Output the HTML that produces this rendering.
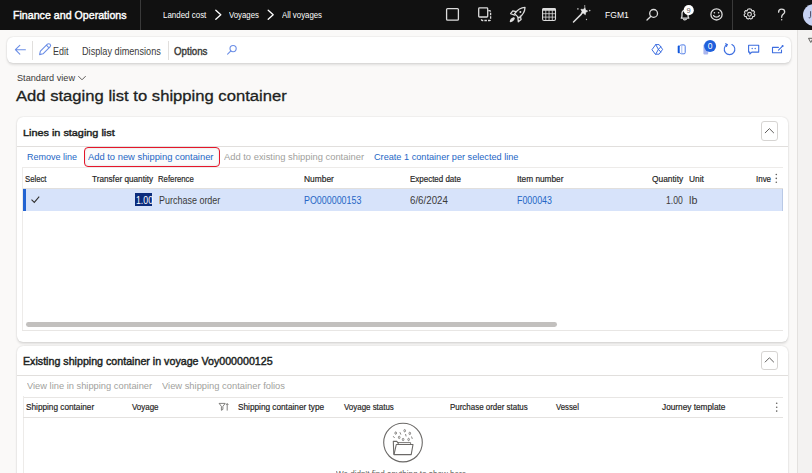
<!DOCTYPE html>
<html><head><meta charset="utf-8">
<style>
*{box-sizing:border-box;margin:0;padding:0}
html,body{width:812px;height:473px;overflow:hidden;background:#faf9f8;font-family:"Liberation Sans",sans-serif;color:#201f1e;position:relative}
.tx{position:absolute;white-space:nowrap;line-height:1.118;transform-origin:0 0}
.r{position:absolute}
svg{position:absolute;left:0;top:0;overflow:visible}
</style></head><body>
<!-- right strip -->
<div class="r" style="left:797px;top:30px;width:15px;height:443px;background:#f3f2f1;border-left:1.5px solid #e3e1df"></div>
<!-- top bar -->
<div class="r" style="left:0;top:0;width:812px;height:30px;background:#111111"></div>
<div class="r" style="left:139.5px;top:0;width:1px;height:30px;background:#3a3a3a"></div>
<div class="r" style="left:732px;top:0;width:1px;height:30px;background:#3a3a3a"></div>
<!-- avatar -->
<div class="r" style="left:803px;top:4px;width:22px;height:22px;border-radius:50%;background:#c7d3f3"></div>
<!-- action pane -->
<div class="r" style="left:7px;top:37px;width:784px;height:26px;background:#fff;border-radius:6px;box-shadow:0 0 1.5px rgba(0,0,0,.14),0 1.3px 2.6px rgba(0,0,0,.11)"></div>
<div class="r" style="left:32px;top:40.5px;width:1px;height:19px;background:#e1dfdd"></div>
<div class="r" style="left:167.5px;top:40.5px;width:1px;height:19px;background:#e1dfdd"></div>
<!-- card 1 -->
<div class="r" style="left:17px;top:117px;width:771px;height:224.5px;background:#fff;border-radius:6px;box-shadow:0 0 1.5px rgba(0,0,0,.14),0 1.3px 2.6px rgba(0,0,0,.11)"></div>
<div class="r" style="left:17px;top:146px;width:771px;height:1px;background:#e1dfdd"></div>
<div class="r" style="left:761px;top:121px;width:17px;height:20px;border:1px solid #d6d4d2;border-radius:3px"></div>
<!-- red highlight box -->
<div class="r" style="left:84.3px;top:147px;width:135.6px;height:20px;border:1.7px solid #e5162a;border-radius:4px;background:#fbfbfb;box-shadow:inset 0 0 2.5px rgba(0,0,0,.13)"></div>
<!-- grid 1 -->
<div class="r" style="left:22px;top:167px;width:760.5px;height:164px;border:1px solid #edebe9;border-right:none;border-bottom:none"></div>
<div class="r" style="left:22.5px;top:188px;width:760px;height:1px;background:#e1dfdd"></div>
<div class="r" style="left:22.5px;top:189px;width:760px;height:22px;background:#d7e3fa;border-right:1px solid #b9c9e6"></div>
<div class="r" style="left:22.5px;top:189px;width:3px;height:22px;background:#2364d2"></div>
<div class="r" style="left:135.2px;top:192.8px;width:16.9px;height:13.5px;background:#0c2c7c"></div>
<div class="r" style="left:26px;top:322.2px;width:531.4px;height:4.7px;border-radius:2.4px;background:#c2c0be"></div>
<div class="r" style="left:22px;top:329.5px;width:760.5px;height:1.3px;background:#e8e6e4"></div>
<!-- card 2 -->
<div class="r" style="left:17px;top:346px;width:771px;height:140px;background:#fff;border-radius:6px;box-shadow:0 0 1.5px rgba(0,0,0,.14),0 1.3px 2.6px rgba(0,0,0,.11)"></div>
<div class="r" style="left:17px;top:374.5px;width:771px;height:1px;background:#e1dfdd"></div>
<div class="r" style="left:761px;top:350.5px;width:17px;height:19px;border:1px solid #d6d4d2;border-radius:3px"></div>
<div class="r" style="left:22.5px;top:396.5px;width:760px;height:1.3px;background:#e8e6e4"></div>
<div class="r" style="left:22.5px;top:396px;width:1px;height:80px;background:#edebe9"></div>
<div class="r" style="left:22.5px;top:416.9px;width:760px;height:1.2px;background:#e4e2e0"></div>

<svg width="812" height="473" viewBox="0 0 812 473">
<g fill="none" stroke="#dcdcdc" stroke-width="1.3" stroke-linecap="round" stroke-linejoin="round">
  <!-- breadcrumb chevrons -->
  <path d="M215.8 10.3 L220.8 14.8 L215.8 19.3" stroke="#fff"/>
  <path d="M268.2 10.3 L273.2 14.8 L268.2 19.3" stroke="#fff"/>
  <!-- square -->
  <rect x="446.6" y="8.6" width="11.8" height="11.6" rx="1"/>
  <!-- duplicate -->
  <rect x="478.7" y="7.9" width="9" height="9.1" rx="0.8"/>
  <path d="M488.3 10.7 H489.4 Q490.6 10.7 490.6 11.9 V19.3 Q490.6 20.5 489.4 20.5 H482.6 Q481.4 20.5 481.4 19.3 V17.7" stroke-dasharray="2.5 1.1" stroke-linecap="butt"/>
  <!-- rocket -->
  <path d="M525 7.4 C520.6 7.6 517.2 10.2 514.6 13.6 L518.9 17.9 C522.3 15.3 524.9 11.9 525 7.4 Z"/>
  <path d="M516.2 11.6 L512.8 10.9 L510.6 13.7 L514.8 15.2"/>
  <path d="M520.4 16.2 L521.1 19.6 L518.3 21.8 L517.9 17.4"/>
  <path d="M513.6 17.8 C511.9 18.3 510.6 19.8 510.4 21.5 C512.1 21.3 513.6 20 514.2 18.3 Z" fill="#dcdcdc"/>
  <circle cx="520.4" cy="11.9" r="1" fill="#dcdcdc" stroke="none"/>
  <!-- calendar -->
  <rect x="542.6" y="8.6" width="12.9" height="11.9" rx="1.5" stroke-width="1.1"/>
  <path d="M542.1 10.8 V9.8 Q542.1 8.1 543.8 8.1 H554.3 Q556 8.1 556 9.8 V10.8 Z" fill="#dcdcdc" stroke="none"/>
  <path d="M542.6 13.7 H555.5 M542.6 17.1 H555.5 M545.8 10.5 V20.5 M549.05 10.5 V20.5 M552.3 10.5 V20.5" stroke-width="0.8"/>
  <!-- wand -->
  <path d="M573.5 22 L581.4 14.1" stroke-width="1.5"/>
  <path d="M584.96 7.73 L585.55 10.04 L587.69 11.11 L585.68 12.39 L585.33 14.75 L583.48 13.23 L581.12 13.63 L582.00 11.40 L580.90 9.28 L583.28 9.43 Z" fill="#e8e8e8" stroke="#e8e8e8" stroke-width="0.6"/>
  <circle cx="577.9" cy="8.9" r="0.8" fill="#bdbdbd" stroke="none"/>
  <circle cx="584.7" cy="5.9" r="0.75" fill="#bdbdbd" stroke="none"/>
  <circle cx="589.7" cy="10.6" r="0.8" fill="#bdbdbd" stroke="none"/>
  <circle cx="586.5" cy="19.5" r="0.65" fill="#bdbdbd" stroke="none"/>
  <!-- search -->
  <circle cx="653.6" cy="13.4" r="3.9"/>
  <path d="M650.9 16.2 L647 20"/>
  <!-- bell -->
  <path d="M681.3 18.2 C681.8 17.4 682 16.6 682 15.2 V13.6 C682 11.6 683.3 10.3 685 10.3 C686.7 10.3 688 11.6 688 13.6 V15.2 C688 16.6 688.3 17.4 688.8 18.2 Z"/>
  <path d="M683.6 19.3 C684 20 685 20.3 686.3 19.3"/>
  <circle cx="688.7" cy="10.2" r="5.1" fill="#ffffff" stroke="none"/>
  <!-- smiley -->
  <circle cx="716.5" cy="14.4" r="5.6"/>
  <circle cx="714.4" cy="12.8" r="0.8" fill="#dcdcdc" stroke="none"/>
  <circle cx="718.6" cy="12.8" r="0.8" fill="#dcdcdc" stroke="none"/>
  <path d="M713.6 15.6 C714.8 17.6 718.2 17.6 719.4 15.6"/>
  <!-- gear -->
  <path d="M749.5 8.8 L751.2 9.3 L751.8 10.9 L753.5 10.6 L754.6 12 L753.8 13.5 L755 14.8 L754.3 16.4 L752.6 16.6 L752.3 18.3 L750.8 19.1 L749.5 18.1 L748.2 19.1 L746.7 18.3 L746.4 16.6 L744.7 16.4 L744 14.8 L745.2 13.5 L744.4 12 L745.5 10.6 L747.2 10.9 L747.8 9.3 Z" stroke-width="1.1"/>
  <circle cx="749.5" cy="14.3" r="1.9" stroke-width="1.1"/>
  <!-- question -->
  <path d="M778.6 12.2 C778.6 10.3 780 9.2 781.6 9.2 C783.3 9.2 784.7 10.3 784.7 12 C784.7 13.9 781.7 14.4 781.7 16.8 V17.3"/>
  <circle cx="781.7" cy="19.8" r="0.7" fill="#dcdcdc" stroke="none"/>
</g>
<path d="M808.5 38.3 L813 38.3 L810.8 42.5 Z" fill="none" stroke="#605e5c" stroke-width="1"/>
<!-- avatar J -->
<path d="M810.6 11.2 V16.6 C810.6 17.7 809.7 18.1 808.7 17.7" fill="none" stroke="#3a3a55" stroke-width="0.9"/>
<!-- action pane icons -->
<g fill="none" stroke="#3d6ee0" stroke-width="1.1" stroke-linecap="round" stroke-linejoin="round">
  <path d="M25.4 49.7 H15.4 M19.8 45.3 L15.4 49.7 L19.8 54.1" stroke="#6b8ee6"/>
  <path d="M39.6 54.6 L40.4 51.2 L47.4 44.2 C48.1 43.5 49.3 43.5 50 44.2 C50.7 44.9 50.7 46.1 50 46.8 L43 53.8 Z M46.4 45.2 L49 47.8" stroke="#6b8ee6"/>
  <circle cx="233.1" cy="48.6" r="3.1" stroke="#6b8ee6"/>
  <path d="M230.9 50.8 L227.6 54.1" stroke="#6b8ee6"/>
  <!-- diamond -->
  <path d="M652.2 49.4 L655.7 44.6 H659.1 L662.6 49.4 L659.1 54.2 H655.7 Z M655.7 44.6 L658.4 49.4 L655.7 54.2 M658.4 49.4 L660.8 46.8 M658.4 49.4 L660.8 52" stroke-width="1"/>
  <!-- office -->
  <path d="M679.5 46 Q680.5 45 681.6 44.9 H684 Q685.2 45 685.2 46.2 V52.6 Q685.2 53.8 684 53.8 H681.6 Q680.5 53.7 679.5 52.8" stroke-width="1" stroke="#4d7be6"/>
  <path d="M678.7 46.5 V52.3" stroke-width="2" stroke="#0f56dc"/>
  <path d="M681.8 45.6 V53.2" stroke-width="0.9" stroke="#9db5f2"/>
  <!-- refresh -->
  <path d="M727.2 44.6 A5.3 5.3 0 1 0 731.9 44.6"/>
  <path d="M725.6 43.8 L727.2 44.6 L726.5 46.4" stroke-width="1.2"/>
  <!-- comment -->
  <path d="M748.6 45.2 H758.7 V52.1 H751.8 L749.8 54 V52.1 H748.6 Z"/>
  <circle cx="752.2" cy="48.5" r="0.7" fill="#3d6ee0" stroke="none"/>
  <circle cx="755.2" cy="48.5" r="0.7" fill="#3d6ee0" stroke="none"/>
  <!-- open new -->
  <path d="M778.4 47.4 H772.5 V52.7 H781.5 V50"/>
  <path d="M778.5 50.2 L782.6 46.1"/>
  <circle cx="782.6" cy="46" r="1" fill="#3d6ee0" stroke="none"/>
  <!-- collapse chevrons -->
  <path d="M765.2 132.8 L769.4 128.6 L773.6 132.8" stroke="#605e5c" stroke-width="1"/>
  <path d="M765.2 362 L769.4 357.8 L773.6 362" stroke="#605e5c" stroke-width="1"/>
  <!-- standard view chevron -->
  <path d="M78.6 76.4 L82 79.8 L85.4 76.4" stroke="#605e5c" stroke-width="1"/>
</g>
<!-- badge -->
<path d="M703.4 45.5 C703.4 44.8 704 44.3 704.7 44.3 H707 C707.7 44.3 708.2 44.8 708.2 45.5 V53.4 C708.2 54.1 707.6 54.6 706.9 54.6 H704.7 C704 54.6 703.4 54.1 703.4 53.4 Z" fill="#aab6ee"/>
<circle cx="710.1" cy="46" r="6" fill="#1f60dc"/>
<!-- grid icons -->
<path d="M31.5 199.6 L34.3 202.4 L39.2 196.6" fill="none" stroke="#323130" stroke-width="1.1"/>
<g fill="#605e5c"><circle cx="776.3" cy="174.5" r="0.8"/><circle cx="776.3" cy="178.4" r="0.8"/><circle cx="776.3" cy="182.3" r="0.8"/>
<circle cx="776.7" cy="403.3" r="0.8"/><circle cx="776.7" cy="407.2" r="0.8"/><circle cx="776.7" cy="411.1" r="0.8"/></g>
<!-- filter icon -->
<path d="M219.1 403.4 H225.2 L222.9 406.4 V409.4 L221.4 410.3 V406.4 Z" fill="none" stroke="#5a5856" stroke-width="0.75"/>
<path d="M227.2 410.6 V403.6 M226 404.9 L227.2 403.6 L228.4 404.9" fill="none" stroke="#5a5856" stroke-width="0.75"/>
<!-- empty state -->
<g fill="none" stroke="#6b6967" stroke-width="1.1" stroke-linejoin="round">
  <circle cx="403" cy="442.6" r="19.3"/>
  <path d="M393.8 454.6 L393.3 441.4 H396.8 L397.8 442.8 H399"/>
  <path d="M394 454.6 L396.3 444.5 H413 L411.2 454.6 Z"/>
  <path d="M398.2 444.4 V442.6 H410.6 V444.4" stroke-width="0.9"/>
</g>
<g fill="none" stroke="#6b6967" stroke-width="0.8">
  <ellipse cx="395.7" cy="433.1" rx="0.8" ry="1.2"/>
  <ellipse cx="404.7" cy="430.7" rx="0.8" ry="1.2"/>
  <ellipse cx="409.8" cy="433.4" rx="0.8" ry="1.2"/>
  <ellipse cx="399.2" cy="437.4" rx="0.8" ry="1.2"/>
  <ellipse cx="403.1" cy="439.5" rx="0.8" ry="1.2"/>
  <ellipse cx="408.6" cy="439.5" rx="0.8" ry="1.2"/>
  <path d="M399.9 432.2 L400.9 434.6 M393.2 436.2 L394.6 438 M405.5 434 L406.1 436.4 M411.5 436.5 L412.3 438.9"/>
</g>
<g font-family="Liberation Sans" text-anchor="middle">
<text x="710.1" y="49.2" font-size="8.5" fill="#fff">0</text>
<text x="688.7" y="13.1" font-size="7.5" fill="#555">9</text>
</g>

</svg>
<span class="tx" style="left:13.47px;top:8.56px;font-size:10.97px;font-weight:normal;color:#ffffff;transform:scaleX(0.970);-webkit-text-stroke:0.42px currentColor;">Finance and Operations</span>
<span class="tx" style="left:163.18px;top:9.72px;font-size:9.58px;font-weight:normal;color:#ffffff;transform:scaleX(0.830);">Landed cost</span>
<span class="tx" style="left:228.99px;top:9.72px;font-size:9.58px;font-weight:normal;color:#ffffff;transform:scaleX(0.814);">Voyages</span>
<span class="tx" style="left:281.99px;top:9.72px;font-size:9.58px;font-weight:normal;color:#ffffff;transform:scaleX(0.817);">All voyages</span>
<span class="tx" style="left:604.56px;top:10.14px;font-size:9.44px;font-weight:normal;color:#ffffff;transform:scaleX(0.908);">FGM1</span>
<span class="tx" style="left:52.64px;top:45.51px;font-size:10.69px;font-weight:normal;color:#3b3a39;transform:scaleX(0.837);">Edit</span>
<span class="tx" style="left:82.13px;top:45.51px;font-size:10.69px;font-weight:normal;color:#3b3a39;transform:scaleX(0.856);">Display dimensions</span>
<span class="tx" style="left:174.41px;top:45.51px;font-size:10.69px;font-weight:normal;color:#3b3a39;transform:scaleX(0.909);-webkit-text-stroke:0.42px currentColor;">Options</span>
<span class="tx" style="left:16.63px;top:72.89px;font-size:9.72px;font-weight:normal;color:#3b3a39;transform:scaleX(0.942);">Standard view</span>
<span class="tx" style="left:15.83px;top:87.58px;font-size:15.14px;font-weight:normal;color:#201f1e;transform:scaleX(1.099);-webkit-text-stroke:0.3px #201f1e;">Add staging list to shipping container</span>
<span class="tx" style="left:22.57px;top:127.99px;font-size:9.72px;font-weight:normal;color:#201f1e;transform:scaleX(1.116);-webkit-text-stroke:0.42px currentColor;">Lines in staging list</span>
<span class="tx" style="left:27.04px;top:151.84px;font-size:9.44px;font-weight:normal;color:#2566c5;transform:scaleX(0.957);">Remove line</span>
<span class="tx" style="left:87.52px;top:151.84px;font-size:9.44px;font-weight:normal;color:#2566c5;transform:scaleX(0.994);">Add to new shipping container</span>
<span class="tx" style="left:223.82px;top:151.84px;font-size:9.44px;font-weight:normal;color:#a19f9d;transform:scaleX(0.994);">Add to existing shipping container</span>
<span class="tx" style="left:374.43px;top:151.84px;font-size:9.44px;font-weight:normal;color:#2566c5;transform:scaleX(0.971);">Create 1 container per selected line</span>
<span class="tx" style="left:25.49px;top:173.62px;font-size:9.03px;font-weight:normal;color:#252423;transform:scaleX(0.859);-webkit-text-stroke:0.18px currentColor;">Select</span>
<span class="tx" style="left:92.37px;top:173.62px;font-size:9.03px;font-weight:normal;color:#252423;transform:scaleX(0.908);-webkit-text-stroke:0.18px currentColor;">Transfer quantity</span>
<span class="tx" style="left:158.49px;top:173.62px;font-size:9.03px;font-weight:normal;color:#252423;transform:scaleX(0.861);-webkit-text-stroke:0.18px currentColor;">Reference</span>
<span class="tx" style="left:304.26px;top:173.62px;font-size:9.03px;font-weight:normal;color:#252423;transform:scaleX(0.931);-webkit-text-stroke:0.18px currentColor;">Number</span>
<span class="tx" style="left:410.18px;top:173.62px;font-size:9.03px;font-weight:normal;color:#252423;transform:scaleX(0.883);-webkit-text-stroke:0.18px currentColor;">Expected date</span>
<span class="tx" style="left:516.67px;top:173.62px;font-size:9.03px;font-weight:normal;color:#252423;transform:scaleX(0.918);-webkit-text-stroke:0.18px currentColor;">Item number</span>
<span class="tx" style="left:652.06px;top:173.62px;font-size:9.03px;font-weight:normal;color:#252423;transform:scaleX(0.928);-webkit-text-stroke:0.18px currentColor;">Quantity</span>
<span class="tx" style="left:689.16px;top:173.62px;font-size:9.03px;font-weight:normal;color:#252423;transform:scaleX(0.933);-webkit-text-stroke:0.18px currentColor;">Unit</span>
<span class="tx" style="left:755.58px;top:173.62px;font-size:9.03px;font-weight:normal;color:#252423;transform:scaleX(0.882);-webkit-text-stroke:0.18px currentColor;">Inve</span>
<span class="tx" style="left:135.65px;top:194.64px;font-size:10.00px;font-weight:normal;color:#ffffff;transform:scaleX(0.873);">1.00</span>
<span class="tx" style="left:159.24px;top:194.64px;font-size:10.00px;font-weight:normal;color:#3b3a39;transform:scaleX(0.897);">Purchase order</span>
<span class="tx" style="left:304.44px;top:194.64px;font-size:10.00px;font-weight:normal;color:#2566c5;transform:scaleX(0.890);">PO000000153</span>
<span class="tx" style="left:410.41px;top:194.64px;font-size:10.00px;font-weight:normal;color:#3b3a39;transform:scaleX(0.973);">6/6/2024</span>
<span class="tx" style="left:516.65px;top:194.64px;font-size:10.00px;font-weight:normal;color:#2566c5;transform:scaleX(0.884);">F000043</span>
<span class="tx" style="left:666.46px;top:194.64px;font-size:10.00px;font-weight:normal;color:#3b3a39;transform:scaleX(0.862);">1.00</span>
<span class="tx" style="left:689.37px;top:194.64px;font-size:10.00px;font-weight:normal;color:#3b3a39;transform:scaleX(1.072);">lb</span>
<span class="tx" style="left:22.77px;top:356.39px;font-size:10.28px;font-weight:normal;color:#201f1e;transform:scaleX(1.039);-webkit-text-stroke:0.42px currentColor;">Existing shipping container in voyage Voy000000125</span>
<span class="tx" style="left:26.63px;top:381.19px;font-size:9.17px;font-weight:normal;color:#a19f9d;transform:scaleX(1.017);">View line in shipping container</span>
<span class="tx" style="left:162.43px;top:381.19px;font-size:9.17px;font-weight:normal;color:#a19f9d;transform:scaleX(1.021);">View shipping container folios</span>
<span class="tx" style="left:25.87px;top:403.47px;font-size:8.75px;font-weight:normal;color:#252423;transform:scaleX(0.940);-webkit-text-stroke:0.18px currentColor;">Shipping container</span>
<span class="tx" style="left:131.68px;top:403.47px;font-size:8.75px;font-weight:normal;color:#252423;transform:scaleX(0.909);-webkit-text-stroke:0.18px currentColor;">Voyage</span>
<span class="tx" style="left:237.87px;top:403.47px;font-size:8.75px;font-weight:normal;color:#252423;transform:scaleX(0.941);-webkit-text-stroke:0.18px currentColor;">Shipping container type</span>
<span class="tx" style="left:343.98px;top:403.47px;font-size:8.75px;font-weight:normal;color:#252423;transform:scaleX(0.906);-webkit-text-stroke:0.18px currentColor;">Voyage status</span>
<span class="tx" style="left:449.68px;top:403.47px;font-size:8.75px;font-weight:normal;color:#252423;transform:scaleX(0.908);-webkit-text-stroke:0.18px currentColor;">Purchase order status</span>
<span class="tx" style="left:555.69px;top:403.47px;font-size:8.75px;font-weight:normal;color:#252423;transform:scaleX(0.889);-webkit-text-stroke:0.18px currentColor;">Vessel</span>
<span class="tx" style="left:661.97px;top:403.47px;font-size:8.75px;font-weight:normal;color:#252423;transform:scaleX(0.944);-webkit-text-stroke:0.18px currentColor;">Journey template</span>
<span class="tx" style="left:336.38px;top:469.09px;font-size:9.72px;font-weight:normal;color:#605e5c;transform:scaleX(0.834);">We didn&#39;t find anything to show here</span>
</body></html>
